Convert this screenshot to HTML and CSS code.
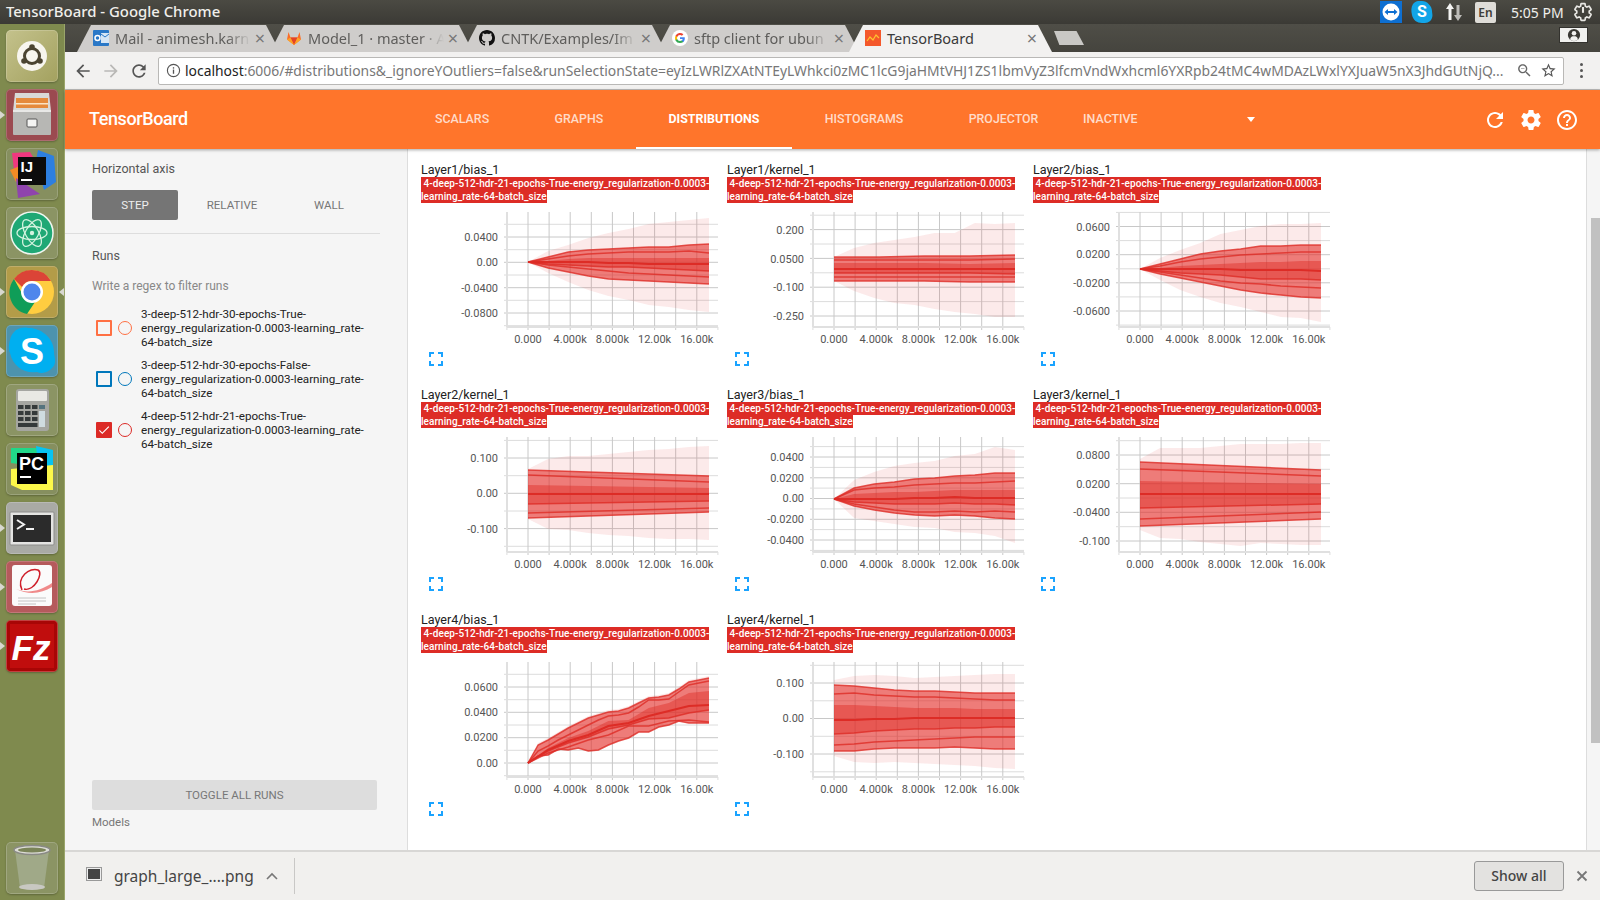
FILE: index.html
```html
<!DOCTYPE html>
<html lang="en">
<head>
  <meta charset="UTF-8" />
  <title>TensorBoard - Google Chrome</title>
  <link rel="stylesheet" href="styles.css">
</head>
<body>
  <div class="topbar">
    <div class="window-title">TensorBoard - Google Chrome</div>
    <div class="tray">
      <svg class="tray-tv" viewBox="0 0 22 22"><rect width="22" height="22" fill="#0e6fd1"/><circle cx="11" cy="11" r="8.5" fill="#fff"/><path d="M4.5 11l3.5-3v2h6V8l3.5 3-3.5 3v-2H8v2z" fill="#0e6fd1"/></svg>
      <svg class="tray-skype" viewBox="0 0 22 24"><path d="M2 4c3-4 7-3 9-3 5 0 10 5 10 10 0 2 1 4 0 7-2 5-6 5-10 5-5 0-9-3-10-8-1-4-1-8 1-11z" fill="#12a5e8"/><text x="11" y="17" class="tray-skype-s">S</text></svg>
      <svg class="tray-arrows" viewBox="0 0 18 20"><path d="M5 1l4 6H6.500v11h-3V7H1z" fill="#f4f4f2"/><path d="M13 19l-4-6h2.500V3h3v10H17z" fill="#bdbcb8"/></svg>
      <div class="tray-lang">En</div>
      <div class="tray-clock">5:05 PM</div>
      <svg class="tray-power" viewBox="0 0 24 24"><path d="M19.430 12.980c.04-.32.07-.64.07-.98s-.03-.66-.07-.98l2.110-1.650c.19-.15.24-.42.12-.64l-2-3.460c-.12-.22-.39-.3-.61-.22l-2.490 1c-.52-.4-1.080-.73-1.690-.98l-.38-2.650C14.460 2.180 14.250 2 14 2h-4c-.25 0-.46.18-.49.42l-.38 2.650c-.61.25-1.170.59-1.690.98l-2.490-1c-.23-.09-.49 0-.61.22l-2 3.460c-.13.22-.07.49.12.64l2.110 1.650c-.04.32-.07.65-.07.98s.03.66.07.98l-2.110 1.650c-.19.15-.24.42-.12.64l2 3.460c.12.22.39.3.61.22l2.490-1c.52.4 1.080.73 1.690.98l.38 2.650c.03.24.24.42.49.42h4c.25 0 .46-.18.49-.42l.38-2.650c.61-.25 1.170-.59 1.690-.98l2.490 1c.23.09.49 0 .61-.22l2-3.460c.12-.22.07-.49-.12-.64z" fill="none" stroke="#e8e7e3" stroke-width="2"/><path d="M12 6v7" stroke="#e8e7e3" stroke-width="2.500"/></svg>
    </div>
  </div>

  <div class="desktop">
    <aside class="launcher">
      <div class="tile tile-ubuntu"><svg viewBox="0 0 52 52"><circle cx="26" cy="26" r="15" fill="#f7f5ee"/><circle cx="26" cy="26" r="7.500" fill="none" stroke="#4b4431" stroke-width="3"/><circle cx="26" cy="17" r="2.800" fill="#4b4431"/><circle cx="18" cy="31" r="2.800" fill="#4b4431"/><circle cx="34" cy="31" r="2.800" fill="#4b4431"/></svg></div>
      <div class="tile tile-files dot-left"><svg viewBox="0 0 52 52"><path d="M9 4h34l2 18H7z" fill="#d9d9d6"/><rect x="10" y="9" width="32" height="10" fill="#e58a3c"/><rect x="10" y="14" width="32" height="1.500" fill="#fbe3c3"/><rect x="7" y="21" width="38" height="25" rx="1" fill="#b7b7b4"/><rect x="7" y="21" width="38" height="2" fill="#e8e8e6"/><rect x="21" y="30" width="10" height="8" rx="1" fill="#f4f4f2" stroke="#555"/></svg></div>
      <div class="tile tile-ij"><svg viewBox="0 0 52 52"><path d="M6 5l18-1 6 10-14 14-8-6z" fill="#f0387f"/><path d="M32 2l16 6 2 26-12 8-8-30z" fill="#2d7fe0"/><path d="M4 22l10-4 4 10-8 6z" fill="#f28b25"/><path d="M10 30l24 16-22 4z" fill="#8f44ad"/><rect x="12" y="9" width="28" height="28" fill="#0c0c0c"/><text x="14.500" y="24" class="tile-ij-text">IJ</text><rect x="15" y="31" width="11" height="2" fill="#fff"/></svg></div>
      <div class="tile tile-atom"><svg viewBox="0 0 52 52"><circle cx="26" cy="26" r="21" fill="#1fa875" stroke="#eef6ef" stroke-width="1.500"/><g fill="none" stroke="#d4f3df" stroke-width="1.300"><ellipse cx="26" cy="26" rx="15" ry="6.500"/><ellipse cx="26" cy="26" rx="15" ry="6.500" transform="rotate(60 26 26)"/><ellipse cx="26" cy="26" rx="15" ry="6.500" transform="rotate(120 26 26)"/></g><circle cx="26" cy="26" r="2.200" fill="#d4f3df"/></svg></div>
      <div class="tile tile-chrome dot-left dot-right"><svg viewBox="0 0 52 52"><circle cx="26" cy="26" r="22" fill="#ffcd40"/><path d="M26 4a22 22 0 0 1 19 11H26a11 11 0 0 0-10 6L8 13A22 22 0 0 1 26 4z" fill="#db4437"/><path d="M8 13l10 18a10 10 0 0 0 11 5l-8 12A22 22 0 0 1 8 13z" fill="#0f9d58"/><circle cx="26" cy="26" r="11" fill="#fff"/><circle cx="26" cy="26" r="8.500" fill="#4f86ec"/></svg></div>
      <div class="tile tile-skype dot-left"><svg viewBox="0 0 52 52"><path d="M4 15C6 5 15 1 22 3c10-1 26 8 26 24 0 5 3 10-1 15-5 6-11 7-16 5-12 2-24-5-27-19-2-4-1-9 0-13z" fill="#00aff0"/><text x="26" y="39" class="tile-skype-text">S</text></svg></div>
      <div class="tile tile-calc"><svg viewBox="0 0 52 52"><rect x="10" y="5" width="33" height="42" rx="3" fill="#a5a6a1"/><rect x="12" y="7" width="29" height="10" rx="1" fill="#e9e9e4"/><g fill="#353a3a"><rect x="12" y="21" width="5.500" height="4"/><rect x="19" y="21" width="5.500" height="4"/><rect x="26" y="21" width="5.500" height="4"/><rect x="12" y="27" width="5.500" height="4"/><rect x="19" y="27" width="5.500" height="4"/><rect x="26" y="27" width="5.500" height="4"/><rect x="12" y="33" width="5.500" height="4"/><rect x="19" y="33" width="5.500" height="4"/><rect x="26" y="33" width="5.500" height="4"/><rect x="12" y="39" width="19.500" height="4"/></g><rect x="33" y="21" width="6" height="4" fill="#55737e"/><rect x="33" y="27" width="6" height="16" fill="#cfdce0"/></svg></div>
      <div class="tile tile-pc"><svg viewBox="0 0 52 52"><path d="M5 5h32l10 6v8L35 24 5 20z" fill="#21d789"/><path d="M30 3l17 4v18l-15-4z" fill="#07c3f2"/><path d="M5 26l42-4v25H16L5 42z" fill="#fcf84a"/><rect x="11" y="10" width="30" height="31" fill="#000"/><text x="13" y="27" class="tile-pc-text">PC</text><rect x="14" y="33" width="11" height="2" fill="#fff"/></svg></div>
      <div class="tile tile-term dot-left"><svg viewBox="0 0 52 52"><rect x="4" y="10" width="44" height="33" rx="1" fill="#e4e4e2" stroke="#8c8c8a"/><rect x="7" y="13" width="38" height="27" fill="#2b2b2b"/><path d="M11 18l7 4.500-7 4.500" fill="none" stroke="#f2f2f2" stroke-width="2"/><rect x="20" y="26" width="8" height="2" fill="#f2f2f2"/></svg></div>
      <div class="tile tile-doc dot-left"><svg viewBox="0 0 52 52"><rect x="6" y="4" width="40" height="41" rx="3" fill="#fbfbfb"/><path d="M10 28c12 5 24 2 36-6v4c-10 6-22 9-36 2z" fill="#f08a8a"/><path d="M16 29C10 16 24 6 32 9c6 3-4 22-14 19" fill="none" stroke="#cf1f2a" stroke-width="1.500"/><path d="M12 37h28M12 40h28M12 43h18" stroke="#c4c4c4"/></svg></div>
      <div class="tile tile-fz dot-left"><svg viewBox="0 0 52 52"><rect x="1" y="1" width="50" height="50" rx="4" fill="#a80606"/><rect x="4" y="4" width="44" height="44" fill="#c00d0d"/><text x="25" y="40" class="tile-fz-text">Fz</text></svg></div>
      <div class="tile tile-trash"><svg viewBox="0 0 52 52"><path d="M9 8h34l-5 38H14z" fill="#a0a988"/><ellipse cx="26" cy="8" rx="18" ry="4.500" fill="#dcdcd6" stroke="#8a8a85" stroke-width="1.500"/><ellipse cx="26" cy="8" rx="14" ry="2.500" fill="#7a8458"/><ellipse cx="26" cy="45" rx="13" ry="3" fill="#c8c8c2"/></svg></div>
    </aside>

    <div class="browser">
      <div class="tabstrip">
        <div class="tab">
          <svg class="favicon" viewBox="0 0 16 16"><rect width="16" height="16" rx="1" fill="#2a78c7"/><rect x="8" y="3" width="8" height="10" fill="#d6e6f5"/><path d="M8 4l4 3 4-3" stroke="#2a78c7" fill="none"/><circle cx="4.500" cy="8" r="2.500" fill="none" stroke="#fff" stroke-width="1.500"/></svg>
          <span class="tab-title tab-fade">Mail - animesh.karn</span><span class="tab-close">×</span>
        </div>
        <div class="tab">
          <svg class="favicon" viewBox="0 0 16 16"><path d="M8 15L1 9.500 2.500 2l2 5.500h7L13.500 2 15 9.500z" fill="#fc6d26"/><path d="M8 15L4.500 7.500h7z" fill="#e24329"/><path d="M8 15L1 9.500l3.500-2zM8 15l7-5.500-3.500-2z" fill="#fca326"/></svg>
          <span class="tab-title tab-fade">Model_1 · master · A</span><span class="tab-close">×</span>
        </div>
        <div class="tab">
          <svg class="favicon" viewBox="0 0 16 16"><path fill="#111" d="M8 0C3.580 0 0 3.580 0 8c0 3.540 2.290 6.530 5.470 7.590.4.07.55-.17.55-.38 0-.19-.01-.82-.01-1.490-2.010.37-2.530-.49-2.690-.94-.09-.23-.48-.94-.82-1.130-.28-.15-.68-.52-.01-.53.63-.01 1.080.58 1.230.82.72 1.210 1.870.87 2.330.66.07-.52.28-.87.51-1.070-1.780-.2-3.640-.89-3.640-3.950 0-.87.31-1.590.82-2.150-.08-.2-.36-1.020.08-2.120 0 0 .67-.21 2.200.82.64-.18 1.320-.27 2-.27.68 0 1.360.09 2 .27 1.530-1.040 2.200-.82 2.200-.82.44 1.100.16 1.920.08 2.120.51.56.82 1.270.82 2.150 0 3.070-1.870 3.750-3.650 3.950.29.25.54.73.54 1.480 0 1.070-.01 1.930-.01 2.200 0 .21.15.46.55.38A8.013 8.013 0 0016 8c0-4.420-3.580-8-8-8z"/></svg>
          <span class="tab-title tab-fade">CNTK/Examples/Im</span><span class="tab-close">×</span>
        </div>
        <div class="tab">
          <svg class="favicon" viewBox="0 0 16 16"><circle cx="8" cy="8" r="8" fill="#fff"/><path d="M12.800 8.200c0-.4 0-.7-.1-1H8v1.900h2.700a2.400 2.400 0 0 1-1 1.500v1.300h1.700c1-.9 1.400-2.200 1.400-3.700z" fill="#4285f4"/><path d="M8 13c1.300 0 2.400-.4 3.400-1.100l-1.700-1.300c-.4.3-1 .5-1.700.5-1.300 0-2.400-.9-2.800-2H3.500v1.300A5 5 0 0 0 8 13z" fill="#34a853"/><path d="M5.200 9.100a3 3 0 0 1 0-2V5.700H3.500a5 5 0 0 0 0 4.600z" fill="#fbbc05"/><path d="M8 5c.7 0 1.400.3 1.900.8l1.500-1.500A5 5 0 0 0 3.500 5.700l1.700 1.400C5.600 5.900 6.700 5 8 5z" fill="#ea4335"/></svg>
          <span class="tab-title tab-fade">sftp client for ubun</span><span class="tab-close">×</span>
        </div>
        <div class="tab tab-active">
          <svg class="favicon" viewBox="0 0 16 16"><rect width="16" height="16" fill="#f4582b"/><path d="M2 11l3-4 3 3 3-5 3 3" fill="none" stroke="#ffc42e" stroke-width="1.200"/></svg>
          <span class="tab-title">TensorBoard</span><span class="tab-close">×</span>
        </div>
        <div class="new-tab"></div>
        <div class="profile">
          <svg viewBox="0 0 16 16"><circle cx="8" cy="8" r="7" fill="#3a3934"/><circle cx="8" cy="6" r="2.600" fill="#f3f3f1"/><path d="M3.500 13c.5-3 2.500-3.600 4.500-3.600s4 .6 4.500 3.600a7 7 0 0 1-9 0z" fill="#f3f3f1"/></svg>
        </div>
      </div>

      <div class="toolbar">
        <svg class="tool-icon" viewBox="0 0 24 24"><path fill="#555" d="M20 11H7.830l5.590-5.590L12 4l-8 8 8 8 1.410-1.410L7.830 13H20v-2z"/></svg>
        <svg class="tool-icon" viewBox="0 0 24 24"><path fill="#b9b8b6" d="M12 4l-1.410 1.410L16.170 11H4v2h12.170l-5.580 5.590L12 20l8-8z"/></svg>
        <svg class="tool-icon" viewBox="0 0 24 24"><path fill="#555" d="M17.650 6.350C16.200 4.900 14.210 4 12 4c-4.420 0-7.990 3.580-7.990 8s3.570 8 7.990 8c3.730 0 6.840-2.550 7.730-6h-2.080c-.82 2.330-3.040 4-5.650 4-3.310 0-6-2.690-6-6s2.690-6 6-6c1.660 0 3.140.69 4.220 1.780L13 11h7V4l-2.350 2.350z"/></svg>
        <div class="omnibox">
          <svg class="info-icon" viewBox="0 0 16 16"><circle cx="8" cy="8" r="6.500" fill="none" stroke="#555" stroke-width="1.200"/><rect x="7.300" y="7" width="1.400" height="4.500" fill="#555"/><rect x="7.300" y="4.500" width="1.400" height="1.500" fill="#555"/></svg>
          <div class="url"><span class="url-host">localhost</span>:6006/#distributions&amp;_ignoreYOutliers=false&amp;runSelectionState=eyIzLWRlZXAtNTEyLWhkci0zMC1lcG9jaHMtVHJ1ZS1lbmVyZ3lfcmVndWxhcml6YXRpb24tMC4wMDAzLWxlYXJuaW5nX3JhdGUtNjQ...</div>
          <svg class="omni-icon" viewBox="0 0 24 24"><path fill="#666" d="M15.500 14h-.79l-.28-.27C15.410 12.590 16 11.110 16 9.500 16 5.910 13.090 3 9.500 3S3 5.910 3 9.500 5.910 16 9.500 16c1.610 0 3.090-.59 4.230-1.570l.27.28v.79l5 4.990L20.490 19l-4.990-5zm-6 0C7.010 14 5 11.990 5 9.500S7.010 5 9.500 5 14 7.010 14 9.500 11.990 14 9.500 14zM7 9h5v1H7z"/></svg>
          <svg class="omni-icon" viewBox="0 0 24 24"><path fill="#555" d="M22 9.240l-7.190-.62L12 2 9.190 8.630 2 9.240l5.460 4.730L5.820 21 12 17.270 18.180 21l-1.630-7.030L22 9.240zM12 15.400l-3.760 2.270 1-4.280-3.320-2.880 4.380-.38L12 6.100l1.710 4.040 4.380.38-3.320 2.880 1 4.280L12 15.400z"/></svg>
        </div>
        <div class="chrome-menu"><i></i><i></i><i></i></div>
      </div>

      <header class="tb-header">
        <div class="tb-logo">TensorBoard</div>
        <nav class="tb-nav">
          <a class="tb-tab">SCALARS</a>
          <a class="tb-tab">GRAPHS</a>
          <a class="tb-tab tb-tab-active">DISTRIBUTIONS</a>
          <a class="tb-tab">HISTOGRAMS</a>
          <a class="tb-tab">PROJECTOR</a>
          <a class="tb-inactive">INACTIVE</a>
          <span class="tb-caret"></span>
        </nav>
        <div class="tb-actions">
          <svg viewBox="0 0 24 24"><path d="M17.650 6.350C16.200 4.900 14.210 4 12 4c-4.420 0-7.990 3.580-7.990 8s3.570 8 7.990 8c3.730 0 6.840-2.550 7.730-6h-2.080c-.82 2.330-3.040 4-5.650 4-3.310 0-6-2.690-6-6s2.690-6 6-6c1.660 0 3.140.69 4.220 1.780L13 11h7V4l-2.350 2.350z"/></svg>
          <svg viewBox="0 0 24 24"><path d="M19.430 12.980c.04-.32.07-.64.07-.98s-.03-.66-.07-.98l2.110-1.650c.19-.15.24-.42.12-.64l-2-3.460c-.12-.22-.39-.3-.61-.22l-2.490 1c-.52-.4-1.080-.73-1.690-.98l-.38-2.650C14.460 2.180 14.250 2 14 2h-4c-.25 0-.46.18-.49.42l-.38 2.650c-.61.25-1.170.59-1.690.98l-2.490-1c-.23-.09-.49 0-.61.22l-2 3.460c-.13.22-.07.49.12.64l2.110 1.650c-.04.32-.07.65-.07.98s.03.66.07.98l-2.110 1.650c-.19.15-.24.42-.12.64l2 3.460c.12.22.39.3.61.22l2.490-1c.52.4 1.080.73 1.690.98l.38 2.650c.03.24.24.42.49.42h4c.25 0 .46-.18.49-.42l.38-2.650c.61-.25 1.170-.59 1.690-.98l2.490 1c.23.09.49 0 .61-.22l2-3.460c.12-.22.07-.49-.12-.64l-2.110-1.650zM12 15.500c-1.930 0-3.500-1.570-3.500-3.500s1.570-3.500 3.500-3.500 3.500 1.570 3.500 3.500-1.570 3.500-3.500 3.500z"/></svg>
          <svg viewBox="0 0 24 24"><path d="M11 18h2v-2h-2v2zm1-16C6.480 2 2 6.480 2 12s4.480 10 10 10 10-4.480 10-10S17.520 2 12 2zm0 18c-4.410 0-8-3.590-8-8s3.590-8 8-8 8 3.590 8 8-3.590 8-8 8zm0-14c-2.210 0-4 1.790-4 4h2c0-1.100.9-2 2-2s2 .9 2 2c0 2-3 1.750-3 5h2c0-2.250 3-2.500 3-5 0-2.210-1.790-4-4-4z"/></svg>
        </div>
      </header>

      <div class="tb-body">
        <aside class="sidebar">
          <section class="axis-section">
            <div class="side-label">Horizontal axis</div>
            <div class="axis-buttons">
              <div class="axis-btn axis-btn-on">STEP</div>
              <div class="axis-btn">RELATIVE</div>
              <div class="axis-btn">WALL</div>
            </div>
          </section>
          <section class="runs-section">
            <div class="side-label">Runs</div>
            <div class="regex">Write a regex to filter runs</div>
            <div class="run">
              <span class="run-check check-orange"></span><span class="run-radio radio-orange"></span>
              <span class="run-name">3-deep-512-hdr-30-epochs-True-energy_regularization-0.0003-learning_rate-64-batch_size</span>
            </div>
            <div class="run">
              <span class="run-check check-blue"></span><span class="run-radio radio-blue"></span>
              <span class="run-name">3-deep-512-hdr-30-epochs-False-energy_regularization-0.0003-learning_rate-64-batch_size</span>
            </div>
            <div class="run">
              <span class="run-check check-red"><svg viewBox="0 0 24 24"><path fill="#fff" d="M9 16.170L4.830 12l-1.420 1.410L9 19 21 7l-1.410-1.410z"/></svg></span><span class="run-radio radio-red"></span>
              <span class="run-name">4-deep-512-hdr-21-epochs-True-energy_regularization-0.0003-learning_rate-64-batch_size</span>
            </div>
          </section>
          <div class="toggle-runs">TOGGLE ALL RUNS</div>
          <div class="models">Models</div>
        </aside>
        <main class="dash">
          <div class="card-grid" id="cards"></div>
          <div class="scrollbar"><div class="scroll-thumb"></div></div>
        </main>
      </div>

      <footer class="downloads">
        <svg class="dl-file" viewBox="0 0 16 14"><rect x=".5" y=".5" width="15" height="13" fill="#eee" stroke="#999"/><rect x="2" y="2" width="12" height="10" fill="#444"/></svg>
        <span class="dl-name">graph_large_....png</span>
        <svg class="dl-chevron" viewBox="0 0 12 8"><path d="M1 7l5-5 5 5" fill="none" stroke="#777" stroke-width="1.600"/></svg>
        <span class="dl-divider"></span>
        <span class="dl-spacer"></span>
        <div class="dl-showall">Show all</div>
        <svg class="dl-close" viewBox="0 0 12 12"><path d="M1.500 1.500l9 9M10.500 1.500l-9 9" stroke="#777" stroke-width="1.800"/></svg>
      </footer>
    </div>
  </div>
  <script src="charts.js"></script>
</body>
</html>
```

FILE: styles.css
```css
* { box-sizing: border-box; }
html, body { height: 100%; }
body {
  margin: 0;
  width: 1600px;
  height: 900px;
  overflow: hidden;
  display: flex;
  flex-direction: column;
  font-family: Roboto, sans-serif;
  background: #fff;
}

/* ubuntu top panel */
.topbar {
  height: 24px;
  display: flex;
  justify-content: space-between;
  align-items: center;
  background: linear-gradient(#4b4a43, #3b3a35);
  color: #f0efeb;
  font-family: "Noto Sans", sans-serif;
}
.window-title { padding: 0 0 2px 6px; font-size: 14.900px; font-weight: 500; }
.tray { display: flex; align-items: center; height: 24px; }
.tray-tv { width: 22px; height: 22px; }
.tray-skype { width: 22px; height: 24px; margin-left: 9px; }
.tray-skype-s { font: bold 16px Roboto, sans-serif; fill: #fff; text-anchor: middle; }
.tray-arrows { width: 18px; height: 20px; margin-left: 12px; }
.tray-lang {
  width: 21px;
  height: 21px;
  margin-left: 12px;
  background: #dfddd8;
  color: #3d3c37;
  border-radius: 2px;
  font-size: 12px;
  font-weight: 600;
  line-height: 21px;
  text-align: center;
}
.tray-clock { margin-left: 15px; font-size: 14px; width: 56px; }
.tray-power { width: 20px; height: 20px; margin: 0 7px 0 6px; }

.desktop { flex: 1; display: flex; min-height: 0; }

/* launcher */
.launcher {
  width: 65px;
  flex: none;
  display: flex;
  flex-direction: column;
  gap: 7px;
  padding: 6px 0 6px 6px;
  background: #7f8a4e;
  border-right: 1px solid #9aa56a;
}
.tile {
  position: relative;
  width: 52px;
  height: 52px;
  border-radius: 5px;
  box-shadow: inset 0 0 0 1px rgba(255,255,255,.18), 0 1px 2px rgba(0,0,0,.25);
}
.tile svg { display: block; width: 52px; height: 52px; }
.tile-ubuntu { background: linear-gradient(135deg, #c4c28c, #a3a15f); }
.tile-files { background: #9b4a50; }
.tile-ij { background: #868f5f; }
.tile-atom { background: #8b9464; }
.tile-chrome { background: #b39c48; }
.tile-skype { background: #4d93ad; }
.tile-calc { background: #8b9464; }
.tile-pc { background: #868f5f; }
.tile-term { background: #a9aaa5; }
.tile-doc { background: #b55a5c; }
.tile-fz { background: #b51717; }
.tile-trash { margin-top: auto; background: #8b9464; }
.tile-ij-text { font: bold 15px "Liberation Sans", sans-serif; fill: #fff; }
.tile-pc-text { font: bold 18px "Liberation Sans", sans-serif; fill: #fff; }
.tile-skype-text { font: bold 36px "Liberation Sans", sans-serif; fill: #fff; text-anchor: middle; }
.tile-fz-text { font: italic bold 35px "Liberation Sans", sans-serif; fill: #fff; text-anchor: middle; }
.dot-left::before, .dot-right::after {
  content: "";
  position: absolute;
  top: 22px;
  border: 4px solid transparent;
}
.dot-left::before { left: -6px; border-left: 5px solid #d8d8d0; }
.dot-right::after { right: -6px; border-right: 5px solid #d8d8d0; }

.browser { flex: 1; min-width: 0; display: flex; flex-direction: column; }

/* chrome tabs */
.tabstrip {
  height: 28px;
  display: flex;
  align-items: flex-end;
  padding-left: 12px;
  background: linear-gradient(#4f4e47, #45443e);
  font-family: "Noto Sans", sans-serif;
}
.tab {
  width: 203px;
  height: 27px;
  margin-right: -10px;
  flex: none;
  display: flex;
  align-items: center;
  padding: 0 15px 2px 16px;
  background: #cfcdcb;
  color: #5e5d5b;
  font-size: 14.500px;
  clip-path: polygon(14px 0, calc(100% - 14px) 0, 100% 100%, 0 100%);
}
.tab-active { background: #f2f1f0; color: #3a3a3a; z-index: 1; }
.favicon { width: 16px; height: 16px; flex: none; }
.tab-title {
  flex: 1;
  min-width: 0;
  margin-left: 6px;
  white-space: nowrap;
}
.tab-fade {
  -webkit-mask-image: linear-gradient(90deg, #000 82%, transparent);
  mask-image: linear-gradient(90deg, #000 82%, transparent);
}
.tab-close { margin-left: 4px; font-size: 18px; color: #777; line-height: 1; }
.new-tab {
  width: 30px;
  height: 14px;
  margin: 0 0 7px 12px;
  background: #c9c8c5;
  clip-path: polygon(0 0, 75% 0, 100% 100%, 18% 100%);
}
.profile {
  margin: 0 12px 9px auto;
  width: 29px;
  height: 16px;
  display: flex;
  justify-content: center;
  background: #f1f1ef;
  border: 1px solid #33322e;
}
.profile svg { width: 14px; height: 14px; }

/* chrome toolbar */
.toolbar {
  height: 38px;
  display: flex;
  align-items: center;
  padding-left: 8px;
  background: #f2f1f0;
  border-bottom: 1px solid #bdbcba;
  font-family: "Noto Sans", sans-serif;
}
.tool-icon { width: 20px; height: 20px; margin-right: 8px; flex: none; }
.omnibox {
  width: 1406px;
  height: 28px;
  margin-left: 1px;
  flex: none;
  display: flex;
  align-items: center;
  padding: 0 6px 0 7px;
  background: #fff;
  border: 1px solid #b9b8b6;
  border-radius: 2px;
}
.info-icon { width: 15px; height: 15px; flex: none; }
.url {
  flex: 1;
  min-width: 0;
  margin-left: 4px;
  font-size: 13.900px;
  color: #777;
  white-space: nowrap;
}
.url-host { color: #222; }
.omni-icon { width: 17px; height: 17px; margin-left: 9px; flex: none; }
.omni-icon + .omni-icon { margin-left: 7px; }
.chrome-menu {
  display: flex;
  flex-direction: column;
  gap: 3px;
  margin-left: 16px;
}
.chrome-menu i { width: 3px; height: 3px; background: #555; border-radius: 50%; }

/* tensorboard header */
.tb-header {
  position: relative;
  z-index: 2;
  height: 59px;
  display: flex;
  align-items: center;
  background: #ff752b;
  color: #fff;
  box-shadow: 0 1px 3px rgba(0,0,0,.35);
}
.tb-logo { width: 338px; padding: 0 0 2px 24px; font-size: 18px; font-weight: 500; letter-spacing: -.4px; }
.tb-nav { display: flex; align-items: stretch; height: 100%; font-size: 12.400px; font-weight: 500; }
.tb-tab, .tb-inactive {
  display: flex;
  align-items: center;
  color: rgba(255,255,255,.75);
  border-bottom: 2px solid transparent;
}
.tb-tab { padding: 0 32.700px; }
.tb-tab:first-child { padding-left: 32px; }
.tb-tab-active { color: #fff; font-weight: 700; border-bottom-color: #fff; }
.tb-inactive { margin-left: 12px; }
.tb-caret {
  align-self: center;
  margin-left: 109px;
  border: 4.500px solid transparent;
  border-top: 5px solid #fff;
  border-bottom: 0;
}
.tb-actions { margin-left: auto; display: flex; gap: 12px; padding-right: 21px; }
.tb-actions svg { width: 24px; height: 24px; fill: #fff; }

.tb-body { flex: 1; min-height: 0; display: flex; }

/* sidebar */
.sidebar {
  width: 343px;
  flex: none;
  display: flex;
  flex-direction: column;
  background: #f5f5f5;
  border-right: 1px solid #ddd;
}
.axis-section {
  width: 315px;
  height: 85px;
  padding: 12px 0 0 27px;
  border-bottom: 1px solid #ddd;
}
.side-label { font-size: 12.500px; line-height: 15px; color: #555; }
.axis-buttons { display: flex; gap: 11px; margin-top: 14px; }
.axis-btn {
  width: 86px;
  height: 30px;
  border-radius: 2px;
  color: #777;
  font-size: 11.500px;
  line-height: 30px;
  text-align: center;
}
.axis-btn-on { background: #757575; color: #eee; }
.runs-section { padding: 14px 0 0 27px; flex: 1; }
.regex { margin: 16px 0 8px; font-size: 12px; line-height: 15px; color: #888; }
.run { display: flex; align-items: center; height: 51px; width: 290px; }
.run-check {
  width: 16px;
  height: 16px;
  margin-left: 4px;
  flex: none;
  border: 2px solid;
  border-radius: 1px;
}
.run-check svg { display: block; width: 14px; height: 14px; margin: -1px; }
.check-orange { border-color: #ff7043; }
.check-blue { border-color: #0077bb; }
.check-red { border-color: #dc2a26; background: #dc2a26; }
.run-radio {
  width: 14px;
  height: 14px;
  margin: 0 9px 0 6px;
  flex: none;
  border: 1.500px solid;
  border-radius: 50%;
}
.radio-orange { border-color: #ff7043; }
.radio-blue { border-color: #0077bb; }
.radio-red { border-color: #dc2a26; }
.run-name { font-size: 11.650px; line-height: 14px; color: #222; width: 228px; }
.toggle-runs {
  width: 285px;
  height: 30px;
  margin-left: 27px;
  background: #ddd;
  border-radius: 2px;
  color: #777;
  font-size: 11.500px;
  line-height: 30px;
  text-align: center;
}
.models { margin: 5px 0 21px 27px; font-size: 11.500px; line-height: 14px; color: #777; }

/* chart cards */
.dash {
  position: relative;
  flex: 1;
  min-width: 0;
  padding: 13px 0 0 13px;
  background: #fff;
  overflow: hidden;
}
.card-grid { display: grid; grid-template-columns: repeat(3, 306px); grid-auto-rows: 225px; }
.card-title { font-size: 12.500px; line-height: 15px; color: #212121; }
.card-tag { width: 292px; height: 28px; font-size: 10px; font-weight: 500; letter-spacing: .07px; line-height: 13px; color: #fff; }
.card-tag span { padding: 1px 0; background: #dd2c26; }
.chart { display: block; width: 300px; height: 142px; }
.grid-major { stroke: #c8c8c8; stroke-width: 1; }
.grid-minor { stroke: #dcdcdc; stroke-width: 1; }
.axis-line { stroke: #e0e0e0; stroke-width: 2; }
.tick-label { font: 11px Roboto, sans-serif; fill: #555; }
.tick-y { text-anchor: end; }
.tick-x { text-anchor: middle; }
.band-outer { fill: #e5322d; opacity: .1; }
.band-mid { fill: #e5322d; opacity: .6; }
.band-inner { fill: #dd2c26; opacity: .45; }
.series { fill: none; stroke: #dd2c26; stroke-width: 1.500; opacity: .8; }
.series-mid { opacity: 1; stroke-width: 2; }
.expand {
  display: block;
  width: 24px;
  height: 24px;
  margin-left: 3px;
  fill: #1aa3ff;
}
.scrollbar {
  position: absolute;
  top: 0;
  right: 0;
  bottom: 0;
  width: 14px;
  background: #f5f5f5;
  border-left: 1px solid #ddd;
}
.scroll-thumb {
  position: absolute;
  top: 69px;
  right: 0;
  width: 9px;
  height: 525px;
  background: #c1c1c1;
}

/* download shelf */
.downloads {
  height: 50px;
  flex: none;
  display: flex;
  align-items: center;
  padding-left: 21px;
  background: #f1f0ee;
  border-top: 2px solid #d8d7d5;
  font-family: "Noto Sans", sans-serif;
}
.dl-file { width: 16px; height: 14px; margin-top: -4px; }
.dl-name { margin-left: 12px; font-size: 15.500px; color: #444; }
.dl-chevron { width: 12px; height: 8px; margin-left: 12px; }
.dl-divider { width: 1px; height: 36px; margin-left: 16px; background: #c9c8c6; }
.dl-spacer { flex: 1; }
.dl-showall {
  width: 90px;
  height: 30px;
  background: #e3e2e0;
  border: 1px solid #999;
  border-radius: 3px;
  color: #444;
  font-size: 14px;
  font-weight: 500;
  line-height: 28px;
  text-align: center;
}
.dl-close { width: 12px; height: 12px; margin: 0 12px 0 12px; }
```

FILE: charts.js
```js
// one entry per histogram. y0 is the row of the zero line inside the svg,
// rows are offsets above y0 for max, p93, p84, p69, p50, p31, p16, p7, min
const RUN = '4-deep-512-hdr-21-epochs-True-energy_regularization-0.0003-learning_rate-64-batch_size';

const CHARTS = [
  { title: 'Layer1/bias_1', y0: 57,
    ticks: [[32, '0.0400'], [57, '0.00'], [83, '-0.0400'], [108, '-0.0800']],
    rows: [
      [0, 11, 17, 24, 29, 33, 38, 40, 42, 44],
      [0, 5, 10, 12, 13, 14, 15, 15, 17, 18],
      [0, 3, 6, 8, 9, 10, 10, 10, 11, 9],
      [0, 1, 3, 4, 4, 4, 4, 4, 4, 4],
      [0, 0, 0, 0, -1, -1, -2, -2, -2, -2],
      [0, -2, -3, -4, -5, -5, -6, -7, -8, -9],
      [0, -3, -5, -7, -9, -11, -12, -13, -14, -15],
      [0, -6, -10, -14, -17, -18, -19, -20, -21, -22],
      [0, -11, -20, -28, -34, -38, -43, -45, -48, -50]
    ] },
  { title: 'Layer1/kernel_1', y0: 64,
    ticks: [[24.6, '0.200'], [54, '0.0500'], [82, '-0.100'], [111, '-0.250']],
    rows: [
      [12, 21, 26, 29, 32, 36, 36, 46, 45, 46],
      [12, 12, 13, 13, 14],
      [9, 9, 9, 9, 10],
      [6, 6, 6, 5, 6],
      [0, 0, 0, 0, 0],
      [-4, -4, -4, -4, -5],
      [-8, -8, -8, -8, -8],
      [-12, -12, -12, -13, -13],
      [-12, -22, -29, -34, -36, -40, -43, -45, -48, -48]
    ] },
  { title: 'Layer2/bias_1', y0: 64,
    ticks: [[21.5, '0.0600'], [49, '0.0200'], [77.7, '-0.0200'], [106, '-0.0600']],
    rows: [
      [0, 11, 19, 26, 35, 39, 43, 45, 45, 46],
      [0, 5, 10, 15, 18, 20, 23, 23, 24, 24],
      [0, 3, 7, 10, 12, 14, 15, 16, 17, 17],
      [0, 1, 3, 4, 5, 6, 7, 7, 8, 8],
      [0, 0, 0, 0, 0, -1, -1, -1, -1, -2],
      [0, -2, -4, -5, -6, -8, -10, -10, -10, -11],
      [0, -3, -6, -9, -12, -14, -15, -17, -18, -19],
      [0, -5, -9, -13, -17, -21, -24, -26, -28, -29],
      [0, -11, -21, -28, -34, -38, -43, -48, -49, -53]
    ] },
  { title: 'Layer2/kernel_1', y0: 64,
    ticks: [[28, '0.100'], [63, '0.00'], [98.6, '-0.100']],
    rows: [
      [25, 35, 38, 38, 40, 42, 44, 45, 47, 48],
      [24, 18],
      [19, 12],
      [9, 6],
      [0, 0],
      [-10, -7],
      [-19, -14],
      [-24, -18],
      [-25, -35, -36, -39, -41, -42, -44, -45, -45, -46]
    ] },
  { title: 'Layer3/bias_1', y0: 69,
    ticks: [[27, '0.0400'], [47.6, '0.0200'], [68, '0.00'], [89, '-0.0200'], [110, '-0.0400']],
    rows: [
      [0, 19, 27, 33, 36, 38, 43, 45, 52, 49],
      [0, 11, 15, 17, 20, 21, 23, 24, 26, 26],
      [0, 9, 11, 12, 14, 15, 16, 16, 17, 18],
      [0, 5, 6, 7, 7, 8, 9, 9, 9, 9],
      [0, 0, 0, 0, 1, 1, 2, 1, 1, 1],
      [0, -3, -4, -5, -5, -5, -4, -5, -5, -6],
      [0, -5, -8, -11, -13, -13, -12, -13, -12, -13],
      [0, -7, -11, -14, -16, -17, -16, -17, -19, -20],
      [0, -19, -22, -25, -28, -29, -33, -34, -37, -44]
    ] },
  { title: 'Layer3/kernel_1', y0: 64,
    ticks: [[25, '0.0800'], [53.7, '0.0200'], [82, '-0.0400'], [111, '-0.100']],
    rows: [
      [35, 46, 46, 46, 48, 50, 50, 50, 51, 51],
      [32, 24],
      [25, 18],
      [13, 10],
      [0, 0],
      [-14, -10],
      [-25, -18],
      [-32, -25],
      [-36, -44, -45, -48, -50, -52, -49, -50, -51, -51]
    ] },
  { title: 'Layer4/bias_1', y0: 108,
    ticks: [[32, '0.0600'], [57, '0.0400'], [82, '0.0200'], [108, '0.00']],
    rows: [
      [0, 20, 25, 31, 37, 42, 47, 50, 53, 54, 57, 62, 67, 68, 70, 76, 83, 85, 87],
      [0, 18, 23, 29, 35, 40, 45, 48, 51, 52, 55, 60, 65, 66, 68, 74, 81, 83, 85],
      [0, 12, 17, 23, 28, 33, 38, 43, 47, 48, 50, 56, 63, 63, 64, 71, 78, 80, 82],
      [0, 15, 25, 32, 42, 43, 55, 60, 70, 72],
      [0, 13, 22, 28, 37, 40, 47, 52, 57, 58],
      [0, 12, 20, 26, 34, 38, 44, 45, 50, 53],
      [0, 10, 16, 23, 28, 37, 37, 42, 43, 41],
      [0, 7, 8, 14, 13, 15, 12, 13, 18, 22, 25, 31, 31, 36, 38, 42, 40, 40, 40],
      [0, 6, 7, 13, 12, 14, 11, 12, 17, 21, 24, 30, 30, 35, 37, 41, 39, 39, 39]
    ] },
  { title: 'Layer4/kernel_1', y0: 63,
    ticks: [[28, '0.100'], [63, '0.00'], [99, '-0.100']],
    rows: [
      [38, 42, 43, 42, 40, 41, 42, 43, 44, 44],
      [33, 32, 30, 28, 27, 27, 26, 25, 25, 25],
      [24, 25, 23, 22, 21, 21, 20, 19, 18, 18],
      [13, 13, 12, 11, 10, 10, 10, 9, 9, 9],
      [-2, -2, -1, -1, 0, 0, 0, 0, 0, 0],
      [-16, -15, -13, -12, -11, -11, -10, -10, -9, -9],
      [-27, -26, -24, -23, -22, -21, -20, -19, -19, -19],
      [-33, -33, -31, -30, -30, -30, -29, -30, -31, -31],
      [-38, -44, -45, -44, -45, -46, -47, -48, -50, -51]
    ] }
];

const PLOT = { left: 86, right: 297, top: 7, bottom: 122, x0: 107, xEnd: 288, step: 21.1 };
const X_LABELS = ['0.000', '4.000k', '8.000k', '12.00k', '16.00k'];
const EXPAND = 'M7 14H5v5h5v-2H7v-3zm-2-4h2V7h3V5H5v5zm12 7h-3v2h5v-5h-2v3zM14 5v2h3v3h2V5h-5z';

function rowPoints(row, y0) {
  const dx = (PLOT.xEnd - PLOT.x0) / (row.length - 1);
  return row.map((v, i) => [PLOT.x0 + i * dx, y0 - v]);
}

function toLine(points) {
  return points.map(p => p[0].toFixed(1) + ',' + p[1].toFixed(1)).join(' ');
}

function band(upper, lower, cls) {
  const pts = upper.concat(lower.slice().reverse());
  return `<polygon class="${cls}" points="${toLine(pts)}"/>`;
}

function gridLines(chart) {
  let out = '';
  const ys = chart.ticks.map(t => t[0]);
  const gap = (ys[ys.length - 1] - ys[0]) / (ys.length - 1) / 2;
  // minor lines fall half way between labelled ticks, carried out to the plot edges
  for (let y = ys[0] - gap * 8; y < PLOT.bottom; y += gap) {
    if (y < PLOT.top) continue;
    const major = ys.some(t => Math.abs(t - y) < 1);
    out += `<line class="${major ? 'grid-major' : 'grid-minor'}" x1="${PLOT.left - 3}" x2="${PLOT.right}" y1="${y.toFixed(1)}" y2="${y.toFixed(1)}"/>`;
  }
  for (let i = -1; i <= 9; i++) {
    const x = (PLOT.x0 + i * PLOT.step).toFixed(1);
    // the last column only has its tick under the axis
    const top = i === 9 ? PLOT.bottom : PLOT.top;
    const cls = i >= 0 && i < 9 ? 'grid-major' : 'grid-minor';
    out += `<line class="${cls}" x1="${x}" x2="${x}" y1="${top}" y2="${PLOT.bottom + 3}"/>`;
  }
  return out;
}

function chartSvg(chart) {
  const lines = chart.rows.map(r => rowPoints(r, chart.y0));
  let svg = gridLines(chart);
  svg += band(lines[0], lines[8], 'band-outer');
  svg += band(lines[1], lines[7], 'band-mid');
  svg += band(lines[3], lines[5], 'band-inner');
  [1, 2, 4, 5, 6, 7].forEach(i => {
    svg += `<polyline class="series${i === 4 ? ' series-mid' : ''}" points="${toLine(lines[i])}"/>`;
  });
  svg += `<line class="axis-line" x1="${PLOT.left}" x2="${PLOT.left}" y1="${PLOT.top}" y2="${PLOT.bottom}"/>`;
  svg += `<line class="axis-line" x1="${PLOT.left}" x2="${PLOT.right}" y1="${PLOT.bottom}" y2="${PLOT.bottom}"/>`;
  chart.ticks.forEach(t => {
    svg += `<text class="tick-label tick-y" x="77" y="${t[0] + 4}">${t[1]}</text>`;
  });
  X_LABELS.forEach((label, i) => {
    svg += `<text class="tick-label tick-x" x="${PLOT.x0 + i * PLOT.step * 2}" y="138">${label}</text>`;
  });
  return `<svg class="chart" viewBox="0 0 300 142">${svg}</svg>`;
}

const cards = document.getElementById('cards');
CHARTS.forEach(chart => {
  const div = document.createElement('div');
  div.className = 'card';
  div.innerHTML = `<div class="card-title">${chart.title}</div>` +
    `<div class="card-tag"><span>&nbsp;${RUN}</span></div>` +
    chartSvg(chart) +
    `<svg class="expand" viewBox="0 0 24 24"><path d="${EXPAND}"/></svg>`;
  cards.appendChild(div);
});
```
